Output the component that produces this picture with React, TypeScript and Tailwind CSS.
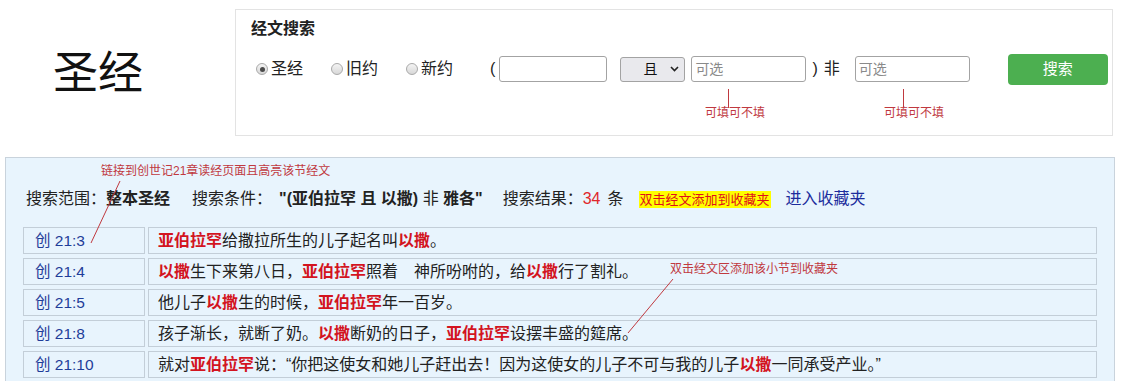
const FONT = "font-['Liberation_Sans','Noto_Sans_CJK_SC',sans-serif]";

function Radio({ checked, label, className }: { checked?: boolean; label: string; className?: string }) {
  return (
    <label className={`flex items-center ${className ?? ''}`}>
      <span className="flex h-[12px] w-[12px] items-center justify-center rounded-full border border-[#a9a9a9] bg-gradient-to-b from-[#f4f4f4] to-[#d8d8d8]">
        {checked && <span className="h-[5px] w-[5px] rounded-full bg-[#4a4a4a]" />}
      </span>
      <span className="ml-[3px] text-[16px] text-[#222]">{label}</span>
    </label>
  );
}

function TextBox({ width, placeholder, className }: { width: string; placeholder?: string; className?: string }) {
  return (
    <div className={`flex h-[26px] items-center rounded-[3px] border border-[#a3a3a3] bg-white pl-[3px] ${width} ${className ?? ''}`}>
      {placeholder && <span className="text-[14px] text-[#8a8a8a]">{placeholder}</span>}
    </div>
  );
}

const Hl = ({ children }: { children: React.ReactNode }) => (
  <b className="font-bold text-[#d3141f]">{children}</b>
);

const verses: { ref: string; text: React.ReactNode }[] = [
  { ref: '创 21:3', text: <><Hl>亚伯拉罕</Hl>给撒拉所生的儿子起名叫<Hl>以撒</Hl>。</> },
  { ref: '创 21:4', text: <><Hl>以撒</Hl>生下来第八日，<Hl>亚伯拉罕</Hl>照着　神所吩咐的，给<Hl>以撒</Hl>行了割礼。</> },
  { ref: '创 21:5', text: <>他儿子<Hl>以撒</Hl>生的时候，<Hl>亚伯拉罕</Hl>年一百岁。</> },
  { ref: '创 21:8', text: <>孩子渐长，就断了奶。<Hl>以撒</Hl>断奶的日子，<Hl>亚伯拉罕</Hl>设摆丰盛的筵席。</> },
  { ref: '创 21:10', text: <>就对<Hl>亚伯拉罕</Hl>说：“你把这使女和她儿子赶出去！因为这使女的儿子不可与我的儿子<Hl>以撒</Hl>一同承受产业。”</> },
];

export default function App() {
  return (
    <div className={`relative h-[381px] w-[1122px] overflow-hidden bg-white ${FONT} text-[#222]`}>
      {/* header */}
      <div className="flex h-[146px]">
        <div className="flex w-[235px] items-center pl-[53px]">
          <h1 className="text-[45px] leading-none text-[#111]">圣经</h1>
        </div>
        <div className="relative mt-[9px] h-[127px] w-[878px] border border-[#e3e3e3] pl-[15px] pt-[8px]">
          <h2 className="text-[16px] font-bold leading-[22px] text-[#222]">经文搜索</h2>
          <div className="mt-[13px] flex h-[32px] items-center">
            <Radio checked label="圣经" className="ml-[5px]" />
            <Radio label="旧约" className="ml-[28px]" />
            <Radio label="新约" className="ml-[28px]" />
            <span className="ml-[37px] text-[16px]">(</span>
            <TextBox width="w-[108px]" className="ml-[4px]" />
            <div className="ml-[13px] flex h-[25px] w-[65px] items-center justify-between rounded-[3px] border border-[#a3a3a3] bg-[#e9e9ed] pl-[22px] pr-[5px]">
              <span className="text-[14px] text-[#111]">且</span>
              <svg width="9" height="6" viewBox="0 0 9 6">
                <polyline points="1,1 4.5,4.5 8,1" fill="none" stroke="#222" strokeWidth="1.6" />
              </svg>
            </div>
            <TextBox width="w-[115px]" placeholder="可选" className="ml-[6px]" />
            <span className="ml-[6px] text-[16px]">)</span>
            <span className="ml-[6px] text-[16px]">非</span>
            <TextBox width="w-[115px]" placeholder="可选" className="ml-[15px]" />
            <button className="ml-[38px] h-[31px] w-[100px] rounded-[4px] bg-[#4caf50] text-[15px] text-white">搜索</button>
          </div>
          <span className="absolute left-[492px] top-[79px] h-[19px] w-px bg-[#c0393f]" />
          <span className="absolute left-[469px] top-[96px] text-[12px] leading-[14px] text-[#c0393f]">可填可不填</span>
          <span className="absolute left-[667px] top-[79px] h-[19px] w-px bg-[#c0393f]" />
          <span className="absolute left-[648px] top-[96px] text-[12px] leading-[14px] text-[#c0393f]">可填可不填</span>
        </div>
      </div>

      {/* results */}
      <div className="relative ml-[5px] mt-[11px] h-[300px] w-[1110px] border border-[#c9d3dc] bg-[#e8f4fd] pt-[29px]">
        <span className="absolute left-[95px] top-[6px] text-[12px] leading-[14px] text-[#c0393f]">链接到创世记21章读经页面且高亮该节经文</span>
        <span className="absolute left-[664px] top-[104px] text-[12px] leading-[14px] text-[#c0393f]">双击经文区添加该小节到收藏夹</span>

        <div className="flex items-center pl-[20px] text-[16px] leading-[24px]">
          <span>搜索范围：</span>
          <b className="font-bold">整本圣经</b>
          <span className="ml-[22px]">搜索条件：</span>
          <span className="ml-[7px]"><b className="font-bold">"(亚伯拉罕 且 以撒)</b> 非 <b className="font-bold">雅各"</b></span>
          <span className="ml-[20px]">搜索结果：</span>
          <span className="text-[#e0262b]">34</span>
          <span className="ml-[7px]">条</span>
          <span className="ml-[15px] bg-[#ffff00] px-[1px] text-[13px] leading-[17px] text-[#e0101a]">双击经文添加到收藏夹</span>
          <a className="ml-[15px] text-[#1c2c9c]">进入收藏夹</a>
        </div>

        <div className="mt-[16px] flex flex-col gap-[4px] pl-[17px]">
          {verses.map((v) => (
            <div key={v.ref} className="flex gap-[3px]">
              <div className="flex h-[27px] w-[122px] items-center border border-[#c3ced8] pl-[11px] text-[15.5px] text-[#1f3d99]">
                {v.ref}
              </div>
              <div className="flex h-[27px] w-[949px] items-center border border-[#c3ced8] pl-[9px] text-[16px] text-[#222]">
                <span>{v.text}</span>
              </div>
            </div>
          ))}
        </div>
      </div>

      <svg className="pointer-events-none absolute left-0 top-0" width="1122" height="381">
        <line x1="120" y1="181" x2="91" y2="243" stroke="#c0393f" strokeWidth="1" />
        <line x1="673" y1="279" x2="628" y2="333" stroke="#c0393f" strokeWidth="1" />
      </svg>
    </div>
  );
}
